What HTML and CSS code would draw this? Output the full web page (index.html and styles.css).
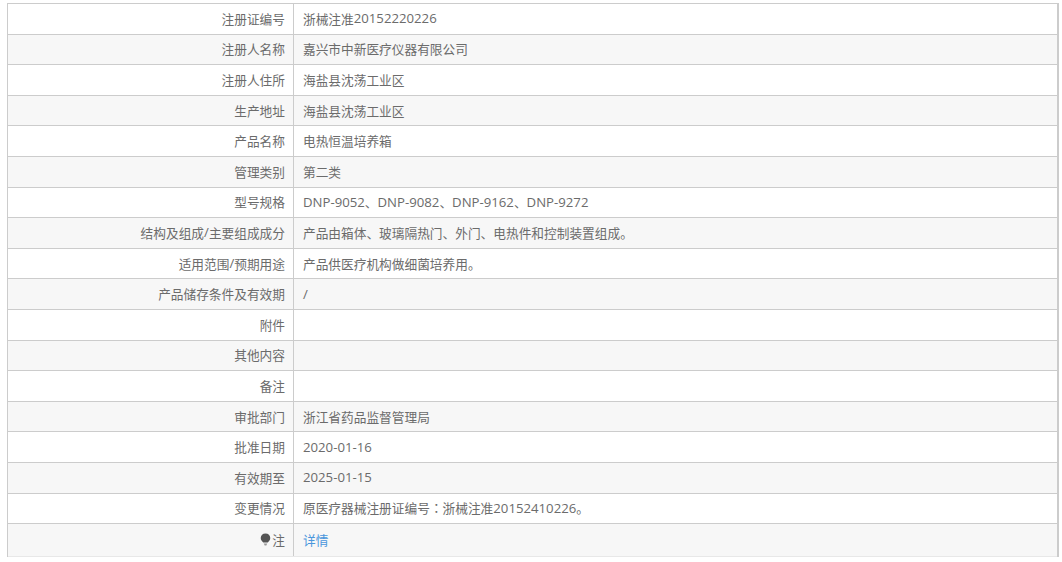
FILE: index.html
```html
<!DOCTYPE html>
<html lang="zh">
<head>
<meta charset="utf-8">
<title>注册证</title>
<link rel="stylesheet" href="styles.css">
</head>
<body>
<div class="sheet">
  <div class="row"><div class="label">注册证编号</div><div class="value">浙械注准<span class="latin">20152220226</span></div></div>
  <div class="row"><div class="label">注册人名称</div><div class="value">嘉兴市中新医疗仪器有限公司</div></div>
  <div class="row"><div class="label">注册人住所</div><div class="value">海盐县沈荡工业区</div></div>
  <div class="row"><div class="label">生产地址</div><div class="value">海盐县沈荡工业区</div></div>
  <div class="row"><div class="label">产品名称</div><div class="value">电热恒温培养箱</div></div>
  <div class="row"><div class="label">管理类别</div><div class="value">第二类</div></div>
  <div class="row"><div class="label">型号规格</div><div class="value"><span class="latin">DNP-9052</span>、<span class="latin">DNP-9082</span>、<span class="latin">DNP-9162</span>、<span class="latin">DNP-9272</span></div></div>
  <div class="row"><div class="label">结构及组成<span class="latin">/</span>主要组成成分</div><div class="value">产品由箱体、玻璃隔热门、外门、电热件和控制装置组成。</div></div>
  <div class="row"><div class="label">适用范围<span class="latin">/</span>预期用途</div><div class="value">产品供医疗机构做细菌培养用。</div></div>
  <div class="row"><div class="label">产品储存条件及有效期</div><div class="value"><span class="latin">/</span></div></div>
  <div class="row"><div class="label">附件</div><div class="value"></div></div>
  <div class="row"><div class="label">其他内容</div><div class="value"></div></div>
  <div class="row"><div class="label">备注</div><div class="value"></div></div>
  <div class="row"><div class="label">审批部门</div><div class="value">浙江省药品监督管理局</div></div>
  <div class="row"><div class="label">批准日期</div><div class="value"><span class="latin">2020-01-16</span></div></div>
  <div class="row"><div class="label">有效期至</div><div class="value"><span class="latin">2025-01-15</span></div></div>
  <div class="row"><div class="label">变更情况</div><div class="value">原医疗器械注册证编号<span class="colon">：</span>浙械注准<span class="latin">20152410226</span>。</div></div>
  <div class="row"><div class="label"><svg class="bulb" viewBox="0 0 10 12" width="11" height="13" aria-hidden="true"><path d="M5 .5C2.400.5.600 2.400.600 4.700c0 1.900 1.200 3 2.300 4.100h4.200c1.100-1.100 2.300-2.200 2.300-4.100C9.400 2.400 7.600.5 5 .5z" fill="#555"/><path d="M3.400 9.600h3.200L5.800 11.500H4.200z" fill="#999"/></svg>注</div><div class="value"><a class="link" href="#">详情</a></div></div>
</div>
</body>
</html>
```
FILE: styles.css
```css
html, body {
  margin: 0;
  padding: 0;
  background: #fff;
  overflow: hidden;
}
body {
  padding: 3px 3px 0 7px;
  font-family: "Noto Sans CJK SC", "Open Sans", sans-serif;
  font-size: 12.7px;
  color: #6b6b6b;
}
.sheet {
  border: solid #ccc;
  border-width: 1px 2px 0 1px;
  width: 1049px;
}
.row {
  box-sizing: border-box;
  height: 30.6px;
  display: grid;
  grid-template-columns: 286px 1fr;
  border-bottom: 1px solid #ccc;
}
.row:nth-child(even) {
  background: #f7f7f7;
}
.row:last-child {
  height: 33px;
  border-bottom-color: #e8e8e8;
}
.label {
  display: flex;
  align-items: center;
  justify-content: flex-end;
  padding: 0 8px 1px 0;
  border-right: 1px solid #ccc;
}
.value {
  display: flex;
  align-items: center;
  padding: 0 0 1px 9px;
}
.latin {
  font-family: "Open Sans", sans-serif;
  font-size: 13.2px;
}
.colon {
  font-family: "Noto Sans CJK TC", sans-serif;
}
.bulb {
  margin-right: 1px;
}
.link {
  color: #4a96dc;
  text-decoration: none;
}
```
